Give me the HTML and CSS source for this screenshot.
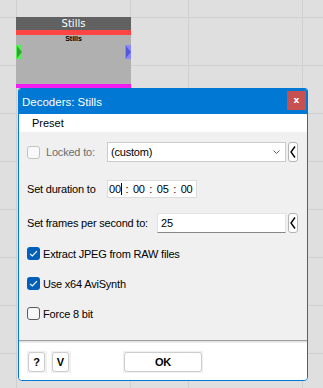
FILE: index.html
```html
<!DOCTYPE html>
<html lang="en">
<head>
    <meta charset="UTF-8">
    <meta name="viewport" content="width=device-width, initial-scale=1.0">
    <title>Decoders: Stills</title>
    <link rel="stylesheet" href="styles.css">
</head>
<body>
    <div class="canvas">
        <!-- graph node -->
        <div class="node">
            <div class="node-title">Stills</div>
            <div class="node-strip"></div>
            <div class="node-body">
                <div class="node-label">Stills</div>
                <div class="ports">
                    <svg class="port" width="6" height="14" viewBox="0 0 6 14">
                        <rect width="6" height="14" fill="#55ee55"/>
                        <polygon points="1,1 6,7 1,13" fill="#33a033"/>
                    </svg>
                    <svg class="port" width="6" height="14" viewBox="0 0 6 14">
                        <rect width="6" height="14" fill="#8888ff"/>
                        <polygon points="1,1 6,7 1,13" fill="#5555dd"/>
                    </svg>
                </div>
            </div>
            <div class="node-foot"></div>
        </div>

        <!-- settings dialog -->
        <div class="dialog">
            <div class="titlebar">
                <span>Decoders: Stills</span>
                <div class="close">x</div>
            </div>
            <div class="menubar"><span>Preset</span></div>

            <div class="content">
                <div class="row row-locked">
                    <div class="lbl lbl-short disabled">
                        <span class="box box-disabled"></span>
                        <span class="lbl-text">Locked to:</span>
                    </div>
                    <div class="select">
                        <span>(custom)</span>
                        <svg width="7" height="4" viewBox="0 0 7 4"><polyline points="0.5,0.5 3.5,3.5 6.5,0.5" fill="none" stroke="#606060" stroke-width="1"/></svg>
                    </div>
                    <div class="back">
                        <svg width="6" height="12" viewBox="0 0 6 12"><polyline points="5,0.5 1,6 5,11.5" fill="none" stroke="#000" stroke-width="1.4"/></svg>
                    </div>
                </div>

                <div class="row row-duration">
                    <div class="lbl lbl-short">Set duration to</div>
                    <div class="timebox">
                        <span class="seg">00<i class="caret"></i></span>
                        <span>:</span>
                        <span class="seg">00</span>
                        <span>:</span>
                        <span class="seg">05</span>
                        <span>:</span>
                        <span class="seg">00</span>
                    </div>
                </div>

                <div class="row row-fps">
                    <div class="lbl lbl-long">Set frames per second to:</div>
                    <div class="textbox">25</div>
                    <div class="back">
                        <svg width="6" height="12" viewBox="0 0 6 12"><polyline points="5,0.5 1,6 5,11.5" fill="none" stroke="#000" stroke-width="1.4"/></svg>
                    </div>
                </div>

                <div class="check check-first">
                    <span class="box box-checked">
                        <svg width="13" height="13" viewBox="0 0 13 13"><polyline points="3,6.8 5.3,9 10,4.2" fill="none" stroke="#fff" stroke-width="1.1"/></svg>
                    </span>
                    <span>Extract JPEG from RAW files</span>
                </div>
                <div class="check">
                    <span class="box box-checked">
                        <svg width="13" height="13" viewBox="0 0 13 13"><polyline points="3,6.8 5.3,9 10,4.2" fill="none" stroke="#fff" stroke-width="1.1"/></svg>
                    </span>
                    <span>Use x64 AviSynth</span>
                </div>
                <div class="check">
                    <span class="box"></span>
                    <span>Force 8 bit</span>
                </div>
            </div>

            <div class="separator"></div>

            <div class="footer">
                <div class="btn-wrap"><div class="btn btn-small">?</div></div>
                <div class="btn-wrap"><div class="btn btn-small">V</div></div>
                <div class="btn-wrap btn-wrap-ok"><div class="btn btn-ok">OK</div></div>
            </div>
        </div>
    </div>
</body>
</html>
```

FILE: styles.css
```css
* {
    box-sizing: border-box;
}
body {
    margin: 0;
    font-family: "Liberation Sans", Arial, sans-serif;
    font-size: 11px;
    color: #000;
}
.canvas {
    position: relative;
    width: 323px;
    height: 388px;
    overflow: hidden;
    background-color: #dfdfdf;
    background-image:
        linear-gradient(to bottom, #d0d0d0 1px, transparent 1px),
        linear-gradient(to right, #d0d0d0 1px, transparent 1px),
        linear-gradient(to right, #d0d0d0 1px, transparent 1px);
    background-size: 100% 48px, 172px 100%, 172px 100%;
    background-position: 0 17px, 16px 0, 130px 0;
}

/* node on the graph */
.node {
    position: absolute;
    left: 16px;
    top: 17px;
    width: 115px;
    display: flex;
    flex-direction: column;
}
.node-title {
    height: 13px;
    background: #616161;
    color: #fff;
    font-family: "DejaVu Sans", sans-serif;
    font-size: 10px;
    line-height: 13px;
    text-align: center;
}
.node-strip {
    height: 5px;
    background: #ff4444;
}
.node-body {
    height: 49px;
    background: #b0b0b0;
}
.node-label {
    font-size: 7px;
    font-weight: bold;
    line-height: 8px;
    text-align: center;
}
.ports {
    display: flex;
    justify-content: space-between;
    margin-top: 2px;
}
.port {
    display: block;
}
.node-foot {
    height: 4px;
    background: #f01ef0;
}

/* dialog window */
.dialog {
    position: absolute;
    left: 18px;
    top: 88px;
    width: 290px;
    height: 293px;
    border: 1px solid #0078d4;
    border-radius: 3px 3px 4px 4px;
    background: #fff;
    display: flex;
    flex-direction: column;
    overflow: hidden;
}
.titlebar {
    height: 25px;
    flex: none;
    background: #0078d4;
    color: #fff;
    font-size: 11.5px;
    display: flex;
    align-items: center;
    justify-content: space-between;
    padding-left: 3px;
    padding-right: 1px;
}
.close {
    width: 19px;
    height: 19px;
    align-self: flex-start;
    margin-top: 2px;
    background: #c75050;
    color: #fff;
    font-family: "DejaVu Sans", sans-serif;
    font-weight: bold;
    font-size: 9px;
    line-height: 18px;
    text-align: center;
}
.menubar {
    height: 18px;
    flex: none;
    background: #fff;
    padding-left: 13px;
    line-height: 18px;
}
.content {
    height: 208px;
    flex: none;
    background: #f0f0f0;
    padding: 10px 0 0 8px;
    display: flex;
    flex-direction: column;
    letter-spacing: -0.2px;
}
.row {
    display: flex;
    align-items: center;
}
.row-locked {
    height: 20px;
}
.row-duration {
    height: 18px;
    margin-top: 18px;
}
.row-fps {
    height: 20px;
    margin-top: 15px;
}
.lbl {
    display: flex;
    align-items: center;
    flex: none;
}
.lbl-short {
    width: 80px;
}
.lbl-long {
    width: 130px;
}
.lbl-text {
    margin-left: 6px;
}
.disabled {
    color: #6d6d6d;
}
.select {
    width: 179px;
    height: 20px;
    background: #fff;
    border: 1px solid #cbcbcb;
    display: flex;
    align-items: center;
    justify-content: space-between;
    padding: 0 5px 0 3px;
}
.select svg {
    display: block;
}
.back {
    width: 10px;
    height: 20px;
    margin-left: 2px;
    background: #fff;
    border: 1px solid #b4b4b4;
    border-radius: 3px;
    display: flex;
    align-items: center;
    justify-content: center;
}
.back svg {
    display: block;
}
.timebox {
    width: 90px;
    height: 18px;
    background: #fff;
    border: 1px solid #dcdcdc;
    padding-left: 1px;
    display: flex;
    align-items: center;
    gap: 4.6px;
}
.seg {
    position: relative;
}
.caret {
    position: absolute;
    right: -1px;
    top: 0;
    width: 1px;
    height: 12px;
    background: #000;
}
.textbox {
    width: 129px;
    height: 20px;
    background: #fff;
    border: 1px solid #e3e3e3;
    border-bottom-color: #868686;
    padding-left: 3px;
    line-height: 18px;
}
.check {
    display: flex;
    align-items: center;
    height: 13px;
    margin-top: 17px;
}
.check-first {
    margin-top: 14px;
}
.check .box {
    margin-right: 3px;
}
.box {
    width: 13px;
    height: 13px;
    flex: none;
    border: 1px solid #5a5a5a;
    border-radius: 3px;
    background: #f7f7f7;
}
.box-disabled {
    border-color: #c2c2c2;
    background: #f9f9f9;
}
.box-checked {
    border: none;
    background: #005fb8;
}
.box-checked svg {
    display: block;
}
.separator {
    height: 3px;
    flex: none;
    border-top: 1px solid #a0a0a0;
    background: linear-gradient(#dadada, #f6f6f6);
}
.footer {
    flex: 1;
    background: #fff;
    display: flex;
    align-items: flex-start;
    padding: 8px 0 0 8px;
    gap: 4px;
}
.btn-wrap {
    background: #f0f0f0;
    padding: 1px 2px 1px 1px;
}
.btn-wrap-ok {
    margin-left: 48px;
    padding: 1px;
}
.btn {
    height: 20px;
    background: #fff;
    border: 1px solid #cdcdcd;
    border-radius: 3px;
    font-weight: bold;
    font-size: 11px;
    line-height: 18px;
    text-align: center;
}
.btn-small {
    width: 17px;
}
.btn-ok {
    width: 78px;
    letter-spacing: -0.3px;
}
```
